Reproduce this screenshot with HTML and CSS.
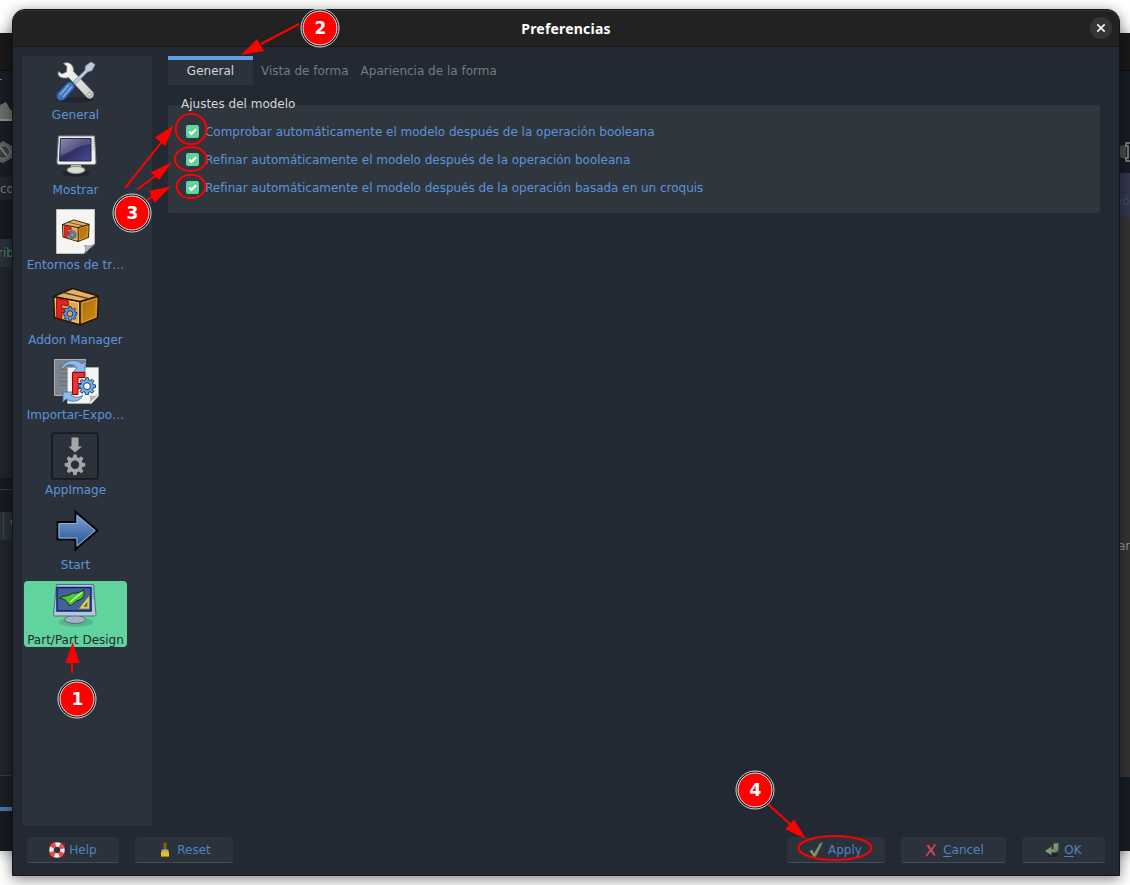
FILE: index.html
```html
<!DOCTYPE html>
<html lang="es">
<head>
<meta charset="utf-8">
<title>Preferencias</title>
<link rel="stylesheet" href="styles.css">
</head>
<body>
<svg class="defs" width="0" height="0" aria-hidden="true">
  <defs>
    <linearGradient id="steel" x1="0" y1="0" x2="1" y2="1"><stop offset="0" stop-color="#fff"/><stop offset="1" stop-color="#c9c9c5"/></linearGradient>
    <linearGradient id="blue" x1="0" y1="0" x2="0" y2="1"><stop offset="0" stop-color="#7fa9da"/><stop offset="1" stop-color="#204a87"/></linearGradient>
    <linearGradient id="screen" x1="0" y1="0" x2="1" y2="1"><stop offset="0" stop-color="#75759b"/><stop offset=".5" stop-color="#303066"/><stop offset="1" stop-color="#4b4b92"/></linearGradient>
    <linearGradient id="side" x1="0" y1="0" x2="1" y2="1"><stop offset="0" stop-color="#a96c08"/><stop offset="1" stop-color="#d08c18"/></linearGradient>
    <linearGradient id="leaf" x1="0" y1="0" x2="1" y2="1"><stop offset="0" stop-color="#a3b892"/><stop offset="1" stop-color="#5d7c50"/></linearGradient>
    <symbol id="gear" viewBox="0 0 24 24">
      <path fill-rule="evenodd" d="M10.3 1h3.4l.6 3.1 1.900.8 2.600-1.800 2.400 2.400-1.800 2.600.8 1.900 3.100.6v3.400l-3.100.6-.8 1.900 1.800 2.600-2.400 2.400-2.600-1.800-1.900.8-.6 3.100h-3.400l-.6-3.100-1.900-.8-2.600 1.800-2.400-2.400 1.800-2.600-.8-1.900L.7 14v-3.400l3.100-.6.8-1.900-1.800-2.600 2.400-2.400 2.600 1.800 1.900-.8zM12 7.600a4.600 4.600 0 1 0 0 9.200 4.600 4.600 0 0 0 0-9.200z"/>
    </symbol>
    <symbol id="box" viewBox="0 0 48 48">
      <g stroke="#241804" stroke-width="1.500" stroke-linejoin="round">
        <path d="M1.500 14.500 28 19.500V43L2.500 35.500z" fill="#e3a74a"/>
        <path d="M28 19.500 46.500 14l-1 22L28 43z" fill="url(#side)"/>
        <path d="M1.500 14.500 20.500 6.500l26 7.500L28 19.500z" fill="#e2b06a"/>
      </g>
      <path d="M11 10.500 37 16.700" stroke="#5d3f11" stroke-width="1.300"/>
      <path d="M3.500 16.500 26.500 21v19.500L4.500 34z" fill="none" stroke="#f3c987"/>
      <path d="M30 21 44.500 16.500l-.7 18.200L30 40.500z" fill="none" stroke="#e0a037"/>
      <path d="M4.500 16.300 16.300 18.700v5.300l-6.600-1.300v3.300l4.500 1v4.500l-4.500-1v6.500L4.700 35.500z" fill="#e62222" stroke="#800" stroke-width=".8"/>
      <use href="#gear" x="10.500" y="24" width="15" height="15" fill="#6394d3" stroke="#173c72" stroke-width="1.600"/>
    </symbol>
  </defs>
</svg>

<div class="backwin">
  <div class="edge left">
    <div class="l-title"></div>
    <div class="l-tools">
      <span class="dash"></span>
      <svg class="tool-shape" width="12" height="24" viewBox="0 0 12 24"><path d="M0 6 6 3l4 7 2 2v10H0z" fill="#6c6c6c"/><path d="M0 20h12v2H0z" fill="#8d8d8d"/></svg>
      <svg class="tool-nut" width="12" height="24" viewBox="0 0 12 24"><path d="M0 3 3 1l9 5v12l-9 5-3-1z" fill="#5c5c5e"/><circle cx="3" cy="12" r="6.500" fill="#3a3c40" stroke="#7b7b7b"/><path d="m0 7 7 9" stroke="#7b7b7b" stroke-width="2"/></svg>
    </div>
    <div class="l-tab">co</div>
    <div class="l-gap"></div>
    <div class="l-green">rib</div>
    <div class="l-panel"></div>
    <div class="l-split"></div>
    <div class="l-head"></div>
    <div class="l-col"><span>V</span></div>
    <div class="l-panel2"></div>
    <div class="l-status"></div>
    <div class="l-blue"></div>
    <div class="l-foot"></div>
  </div>
  <div class="edge right">
    <div class="r-title"></div>
    <div class="r-tools"><svg width="12" height="22" viewBox="0 0 12 22"><path d="M0 5 7 4v14l-7-2z" fill="#4b4b49"/><path d="M12 2H7v3h2v12H7v3h5" fill="none" stroke="#8d8d8d" stroke-width="1.600"/></svg></div>
    <div class="r-tab">ió</div>
    <div class="r-view">ar</div>
    <div class="r-foot"></div>
  </div>
</div>

<div class="dialog">
  <header class="titlebar">
    <span class="title">Preferencias</span>
    <span class="close"><svg width="10" height="10" viewBox="0 0 10 10"><path d="m1.300 1.300 7.400 7.400M8.700 1.300 1.300 8.700" stroke="#f4f4f4" stroke-width="1.700"/></svg></span>
  </header>

  <div class="main">
    <nav class="sidebar">
      <div class="item">
        <svg class="icon" viewBox="0 0 48 48">
          <ellipse cx="25" cy="43" rx="17" ry="3" fill="#1b2027" opacity=".7"/>
          <path d="M7.500 14.500 11 17l4.500-2 .5-5.500-3.500-3C17 4 23 7 22.500 14.500L42 35c2.500 4-2 8.500-6 5.500L17.500 20.500C11 22.500 5.500 19 7.500 14.500z" fill="url(#steel)" stroke="#85877f" stroke-width=".8"/>
          <circle cx="38.500" cy="37.500" r="1.700" fill="#fff" stroke="#888"/>
          <path d="M22 25 34 13.500 34.500 9l5.500-4 4 2.500-3 6-4.500 1.500-12 12z" fill="#bccbdc" stroke="#8496ab" stroke-width=".8"/>
          <path d="M17 25c3-1.500 8 2.500 6.500 6L14 42c-4 3.500-10 1-8-5.500z" fill="#3f74b7" stroke="#173b70"/>
          <path d="m17.500 28-8 9.500M20.500 30l-8 9.500" stroke="#8db8eb" stroke-width="1.500" stroke-linecap="round" opacity=".85"/>
        </svg>
        <span>General</span>
      </div>
      <div class="item">
        <svg class="icon" viewBox="0 0 48 48">
          <ellipse cx="25" cy="41" rx="14" ry="4" fill="#1e2229" opacity=".8"/>
          <path d="M20 33h10l1 5H19z" fill="#b6b6ae"/><ellipse cx="25" cy="38" rx="9" ry="3.500" fill="#dcdcd5" stroke="#8b8c84"/>
          <path d="M7.500 4h36l1.500 26.500q0 2-2 2H8q-2 0-2-2z" fill="#eeeeea" stroke="#85867f"/>
          <path d="M9.500 6.500H40V29H8.500z" fill="url(#screen)" stroke="#26275a"/>
          <path d="M10 7h29.500v5C24 14 20 21 9.500 23z" fill="#fff" opacity=".17"/>
          <path d="M42 7v12" stroke="#aaa" stroke-dasharray="1 1"/>
        </svg>
        <span>Mostrar</span>
      </div>
      <div class="item">
        <svg class="icon" viewBox="0 0 48 48">
          <path d="M5.500 2.500h38V37L33 46.500H5.500z" fill="#f5f5f3" stroke="#bdbfb9"/>
          <path d="M43.500 37 33 46.500c2-2 2-5 .5-8 4 1 7 .5 10-1.500z" fill="#b8bab6" stroke="#858783" stroke-width=".7"/>
          <use href="#box" x="10.500" y="9" width="28.500" height="28.500"/>
        </svg>
        <span>Entornos de tr…</span>
      </div>
      <div class="item">
        <svg class="icon" viewBox="0 0 48 48"><use href="#box" x="1" y="0" width="48" height="48"/></svg>
        <span>Addon Manager</span>
      </div>
      <div class="item">
        <svg class="icon" viewBox="0 0 48 48">
          <path d="M3.500 2.500h31v36h-31z" fill="#7e858e" stroke="#aeb1b5"/>
          <path d="M8 8h18v1H8zM8 12h15v1H8zM8 16h9v1H8zM8 20h9v1H8zM8 24h9v1H8zM8 28h9v1H8z" fill="#68707b"/>
          <path d="M16.500 10.500h31V39l-7 7.500h-24z" fill="#f4f4f2" stroke="#a6a9a4"/>
          <path d="M47.500 37 38 46.500c2-3 1-5 .5-8 4 1 6 .5 9-1.500z" fill="#aeb1a9"/>
          <path d="M10 11C15 1.500 27 2 31 7l3-3v11H22l4-4c-4-5-11-4-14 1z" fill="#8fb9e6" stroke="#3e6ea8" stroke-width=".8"/>
          <path d="M12 35h12l-4 3c4 3 8 3 12 0-3 7-11 8-17 4l-3 3z" fill="#8fb9e6" stroke="#3e6ea8" stroke-width=".8"/>
          <path d="M21.500 15.500h12.500v5h-7v6h5v5h-5v6h-5.500z" fill="#ed3030" stroke="#930000"/>
          <use href="#gear" x="27" y="20" width="18" height="18" fill="#79a7df" stroke="#173f76" stroke-width="1.300"/>
        </svg>
        <span>Importar-Expo…</span>
      </div>
      <div class="item">
        <svg class="icon" viewBox="0 0 48 48">
          <rect x="1" y="1" width="46" height="46" rx="2" fill="#2b313a" stroke="#15191e" stroke-width="1.700"/>
          <path d="M20.500 5.500h7v9h3.500L24 20.500l-6.500-6h3z" fill="#a5a5a5"/>
          <use href="#gear" x="13" y="21.500" width="22" height="22" fill="#a5a5a5"/>
        </svg>
        <span>AppImage</span>
      </div>
      <div class="item">
        <svg class="icon" viewBox="0 0 48 48">
          <path d="M6.500 15h18V5L46.500 23.500 24.500 42.500v-10h-18z" fill="url(#blue)" stroke="#050505" stroke-width="2"/>
          <path d="M8 16.500h18V8.500L44 23.500 26 39v-8H8z" fill="none" stroke="#83b2e5"/>
        </svg>
        <span>Start</span>
      </div>
      <div class="item selected">
        <svg class="icon" viewBox="0 0 48 48">
          <ellipse cx="25" cy="40" rx="17" ry="4.500" fill="#3f6f63" opacity=".3"/>
          <path d="M19 33h10l1 5H18z" fill="#8494a3"/><ellipse cx="24" cy="37.500" rx="10.500" ry="4" fill="#9fb3c4" stroke="#566c7c"/>
          <path d="M5.500 2.500h37l2.500 30q0 1.500-1.500 1.500H4q-1.500 0-1.500-1.500z" fill="#b4c7d6" stroke="#596e7e"/>
          <path d="M6 5.500h34V29H6z" fill="#426196" stroke="#06207c" stroke-width="1.500"/>
          <path d="M8.500 16c4-3 8-1 13-5 4 1 7-1 11-3 2 5 0 9-7 11-3 1-3 5-8 4-1-4-4-6-9-7z" fill="#51c52e" stroke="#102f12"/>
          <path d="M19 20 31 10.500" stroke="#d0f4bd" stroke-width="1.300"/>
          <path d="M38.500 13v14h-11zM36 20.500v4h-3z" fill="#d8cc69" stroke="#746829" stroke-width=".7" fill-rule="evenodd"/>
          <path d="M42 6v12" stroke="#647d91" stroke-dasharray="1 1"/>
        </svg>
        <span>Part/Part Design</span>
      </div>
    </nav>

    <section class="content">
      <div class="tabs">
        <div class="tab active">General</div>
        <div class="tab">Vista de forma</div>
        <div class="tab">Apariencia de la forma</div>
      </div>
      <h2 class="group-title">Ajustes del modelo</h2>
      <div class="group">
        <label class="check"><span class="mark"><svg viewBox="0 0 13 13"><path d="m3.200 6.600 2.200 2.300 4.700-4.600"/></svg></span><span class="label">Comprobar automáticamente el modelo después de la operación booleana</span></label>
        <label class="check"><span class="mark"><svg viewBox="0 0 13 13"><path d="m3.200 6.600 2.200 2.300 4.700-4.600"/></svg></span><span class="label">Refinar automáticamente el modelo después de la operación booleana</span></label>
        <label class="check"><span class="mark"><svg viewBox="0 0 13 13"><path d="m3.200 6.600 2.200 2.300 4.700-4.600"/></svg></span><span class="label">Refinar automáticamente el modelo después de la operación basada en un croquis</span></label>
      </div>
    </section>
  </div>

  <footer class="buttons">
    <div class="btn help"><svg viewBox="0 0 16 16"><circle cx="8" cy="8" r="5.500" fill="none" stroke="#f1efed" stroke-width="4.500"/><circle cx="8" cy="8" r="5.500" fill="none" stroke="#e44c49" stroke-width="4.500" stroke-dasharray="4.320 4.320" stroke-dashoffset="-2.160"/><path d="M.5 5V.5H5M11 .5h4.500V5M.5 11v4.500H5M11 15.500h4.500V11" fill="none" stroke="#9c1218"/></svg>Help</div>
    <div class="btn reset"><svg viewBox="0 0 16 16"><path d="M6.500 1q1.500-1.500 3 0v7h-3z" fill="#8b5a13"/><path d="M4.500 7.500h7V11h-7z" fill="#aaa99b"/><path d="M4 10h8v5H4z" fill="#e4c51e"/><path d="M4 14h8v1H4z" fill="#a98611"/></svg>Reset</div>
    <div class="btn apply"><svg viewBox="0 0 16 16"><path d="m1.500 9 2.500-1.500 2 3.500L12 1l3-.7L8 15H5.500z" fill="url(#leaf)" stroke="#354d32" stroke-width=".7"/></svg>Apply</div>
    <div class="btn cancel"><svg viewBox="0 0 16 16"><path d="m2.500 2.500 3.500-.2 2.300 3.500 3.200-4.300 2.500.5-4 6 3.500 5.500-3 .7-2.800-4-3.700 4.800-2.500-.5 4.500-6.500z" fill="#b74b58" stroke="#3f2025" stroke-width=".8"/></svg><span><u>C</u>ancel</span></div>
    <div class="btn ok"><svg viewBox="0 0 16 16"><ellipse cx="9" cy="13" rx="5" ry="2" fill="#1d2229"/><path d="M9.500 1.500 14.500 1v6q0 3.500-4.500 3.500H7.500v3L1 9l6.500-4.500V7h2z" fill="url(#leaf)" stroke="#415b3b" stroke-width=".7"/></svg><span><u>O</u>K</span></div>
  </footer>
</div>

<svg class="notes" width="1130" height="885" viewBox="0 0 1130 885">
  <g fill="none" stroke="#f00" stroke-width="2">
    <ellipse cx="191" cy="129" rx="15.300" ry="15.300"/>
    <ellipse cx="190.700" cy="159" rx="15.800" ry="12"/>
    <ellipse cx="191" cy="186.500" rx="14.300" ry="11.700"/>
    <ellipse cx="835" cy="848" rx="36.500" ry="12"/>
    <path d="M72 673V660M299 24 261 44M125.300 187.700 162 141.500M137.300 189.300 157 175M145 201.500 153 196M768 804 791 825"/>
  </g>
  <g fill="#f00">
    <path d="M72.700 642 65.500 663h14zM241 55 257 39l7 12zM173.500 125.500 155 137.500l10.500 8.500zM172 162l-21.500 10.500L159 180zM171 186.300 149 191l5.500 12zM806 839 794 819.300l-8.700 10z"/>
  </g>
  <g class="badges">
    <circle class="outer" cx="77" cy="699" r="19"/><circle class="inner" cx="77" cy="699" r="17"/><text x="77.500" y="705">1</text>
    <circle class="outer" cx="320" cy="28" r="19"/><circle class="inner" cx="320" cy="28" r="17"/><text x="320.300" y="34">2</text>
    <circle class="outer" cx="132" cy="213" r="19"/><circle class="inner" cx="132" cy="213" r="17"/><text x="132.300" y="219">3</text>
    <circle class="outer" cx="755" cy="790" r="19"/><circle class="inner" cx="755" cy="790" r="17"/><text x="755.300" y="796">4</text>
  </g>
</svg>
</body>
</html>
```

FILE: styles.css
```css
* { box-sizing: border-box; }
body {
  margin: 0;
  width: 1130px;
  height: 885px;
  overflow: hidden;
  position: relative;
  background: #fff;
  font: 12px/16px "DejaVu Sans", sans-serif;
}
.defs { position: absolute; }

/* window behind the dialog */
.backwin {
  position: absolute;
  inset: 33px 0 34px 0;
  display: flex;
  justify-content: space-between;
  background: #181b20;
  box-shadow: 0 2px 14px rgba(0, 0, 0, .4);
}
.edge { display: flex; flex-direction: column; width: 13px; overflow: hidden; color: #777; }
.right { width: 11px; }
.l-title, .r-title { height: 38px; background: #191919; border-bottom: 1px solid #0b0c0e; }
.l-tools { height: 106px; padding-top: 8px; background: #191d25; display: flex; flex-direction: column; }
.dash { width: 2px; height: 1px; background: #777; }
.tool-shape { margin-top: 19px; }
.tool-nut { margin-top: 17px; }
.l-tab { height: 23px; line-height: 24px; background: #22262d; }
.l-gap { height: 39px; background: #171b22; }
.l-green { height: 28px; line-height: 29px; background: #2a303a; color: #438561; text-indent: -2px; }
.l-panel { height: 211px; background: #20252c; }
.l-split { height: 12px; background: #171a1e; border-bottom: 1px solid #343941; }
.l-head { height: 22px; background: #171b22; }
.l-col { height: 28px; line-height: 27px; background: #2a303a; }
.l-col span { display: block; margin-left: 3px; padding-left: 6px; border-left: 1px solid #3f454f; color: #438561; }
.l-panel2 { height: 236px; background: #20252a; border-bottom: 1px solid #343941; }
.l-status { height: 31px; background: #1b1f25; }
.l-blue { height: 4px; background: #4a77ae; }
.l-foot { flex: 1; background: #181b22; }
.r-tools { height: 102px; padding-top: 70px; background: #181c24; }
.r-tab { height: 44px; padding-top: 20px; background: #31384e; color: #4d4d55; }
.r-view { height: 560px; padding-top: 321px; background: #343434; color: #929292; text-indent: -1px; }
.r-foot { flex: 1; background: #181c24; }

/* dialog */
.dialog {
  position: absolute;
  left: 12px;
  top: 9px;
  width: 1108px;
  height: 867px;
  display: flex;
  flex-direction: column;
  border: 1px solid #11151a;
  border-radius: 13px 13px 0 0;
  background: #232932;
  box-shadow: 0 3px 14px rgba(0, 0, 0, .5);
}
.titlebar {
  height: 37px;
  padding-right: 5px;
  display: grid;
  grid-template-columns: 35px 1fr 24px;
  align-items: center;
  background: #222;
  border-top: 1px solid #353535;
  border-bottom: 1px solid #151719;
  border-radius: 12px 12px 0 0;
}
.title { grid-column: 2; margin-right: 6px; text-align: center; color: #fff; font: bold 14px/20px "Noto Sans", sans-serif; letter-spacing: .2px; }
.close {
  width: 22px;
  height: 22px;
  margin-top: -1px;
  display: flex;
  align-items: center;
  justify-content: center;
  border-radius: 50%;
  background: #353535;
}
.main { display: flex; gap: 16px; height: 779px; padding: 9px 19px 0 9px; }
.sidebar {
  width: 130px;
  height: 770px;
  padding-left: 2px;
  display: flex;
  flex-direction: column;
  gap: 9px;
  background: #2c323c;
  border-radius: 3px;
}
.item {
  width: 103px;
  height: 66px;
  padding-top: 1px;
  display: flex;
  flex-direction: column;
  align-items: center;
  border-radius: 4px;
  color: #5b93db;
  white-space: nowrap;
}
.icon { width: 48px; height: 48px; flex: none; margin-right: 1px; }
.item span { margin-top: 2px; }
.selected { background: #61d39c; color: #232932; }

.content { flex: 1; }
.tabs { display: flex; height: 29px; gap: 8px; }
.tab { padding-top: 7px; color: #76797f; }
.tab + .tab + .tab { margin-left: 4px; }
.active {
  width: 85px;
  border-top: 4px solid #62a0e5;
  padding-top: 3px;
  text-align: center;
  background: #2c323c;
  color: #d3d5d9;
}
.group-title { margin: 11px 0 0 13px; font-size: 12px; font-weight: normal; line-height: 16px; color: #d4d6d9; position: relative; }
.group {
  height: 108px;
  margin-top: -7px;
  padding: 12px 18px;
  background: #30363e;
  border-radius: 3px;
}
.check { display: flex; align-items: center; gap: 6px; height: 28px; color: #5b93db; }
.label { padding-top: 2px; letter-spacing: -.012px; }
.mark { width: 13px; height: 13px; border-radius: 2px; background: #61d39c; }
.mark svg { display: block; width: 13px; height: 13px; fill: none; stroke: #fff; stroke-width: 2.2; }

.buttons { display: flex; gap: 16px; padding: 11px 14px 0 14px; }
.btn {
  height: 26px;
  display: flex;
  align-items: center;
  justify-content: center;
  gap: 4px;
  background: #2c323c;
  border-bottom: 1px solid #464d58;
  border-radius: 3px;
  color: #4e82c0;
}
.btn svg { width: 16px; height: 16px; }
.btn u { text-underline-offset: 2px; }
.help { width: 92px; }
.reset { width: 98px; }
.apply { width: 98px; margin-left: auto; padding-right: 2px; }
.cancel { width: 105px; }
.ok { width: 83px; padding-right: 1px; }

/* annotations drawn over the window */
.notes { position: absolute; left: 0; top: 0; }
.outer { fill: #111; stroke: #eee; stroke-width: .9; }
.inner { fill: #f00; stroke: #fff; stroke-width: .9; }
.badges text { fill: #fff; font: bold 17px "DejaVu Sans", sans-serif; text-anchor: middle; }
```
